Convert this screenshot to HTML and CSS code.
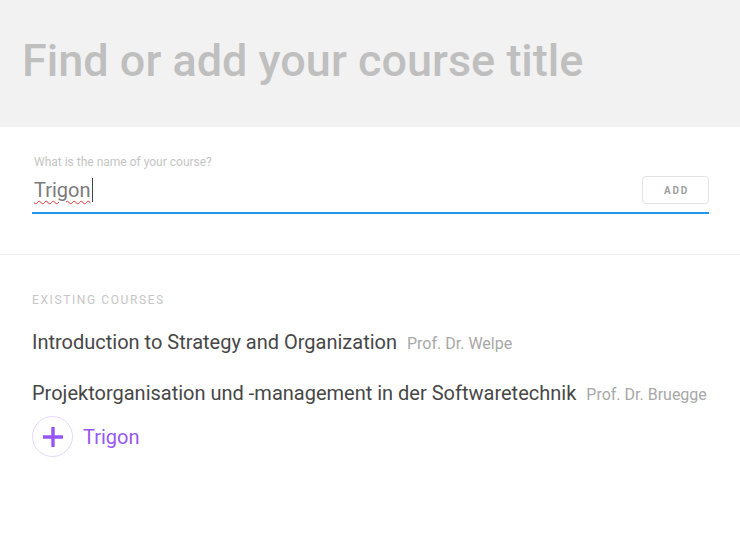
FILE: index.html
```html
<!DOCTYPE html>
<html lang="en">
<head>
<meta charset="utf-8">
<title>Find or add your course title</title>
<link rel="stylesheet" href="styles.css">
</head>
<body>
<header class="header">
  <h1 class="title">Find or add your course title</h1>
</header>
<section class="field">
  <div class="label">What is the name of your course?</div>
  <div class="input-row">
    <div class="input-text"><span class="typed">Trigon</span><span class="caret"></span></div>
    <button class="add-btn">ADD</button>
  </div>
</section>
<section class="existing">
  <div class="section-heading">EXISTING COURSES</div>
  <ul class="courses">
    <li class="course"><span class="course-name">Introduction to Strategy and Organization</span><span class="course-prof">Prof. Dr. Welpe</span></li>
    <li class="course"><span class="course-name">Projektorganisation und -management in der Softwaretechnik</span><span class="course-prof">Prof. Dr. Bruegge</span></li>
  </ul>
  <div class="add-row">
    <span class="plus-circle">
      <svg width="22" height="22" viewBox="0 0 22 22"><path d="M11 1v20M1 11h20" stroke="#9657f5" stroke-width="3.4" fill="none"/></svg>
    </span>
    <span class="add-name">Trigon</span>
  </div>
</section>
</body>
</html>
```

FILE: styles.css
```css
* { box-sizing: border-box; }
html, body {
  margin: 0;
  padding: 0;
  background: #ffffff;
  font-family: Roboto, "Noto Sans", "Liberation Sans", sans-serif;
}
.header {
  background: #f2f2f2;
  height: 127px;
  padding: 0 22px 5px;
  display: flex;
  align-items: center;
}
.title {
  margin: 0;
  font-size: 45px;
  line-height: 48px;
  font-weight: 500;
  color: #bfbfbf;
}
.field {
  padding: 28px 31px 40px 32px;
  border-bottom: 1px solid #eeeeee;
}
.label {
  font-size: 12px;
  line-height: 14px;
  color: #c4c4c4;
  padding-left: 2px;
  margin-bottom: 3px;
}
.input-row {
  display: flex;
  align-items: center;
  justify-content: space-between;
  padding: 4px 0 8px;
  border-bottom: 2px solid #2196f3;
}
.input-text {
  display: flex;
  align-items: center;
  padding-left: 2px;
  font-size: 20px;
  line-height: 28px;
  color: #7a7a7a;
}
.typed {
  text-decoration: underline wavy #e53935;
  text-decoration-thickness: 1px;
  text-underline-offset: 3px;
}
.caret {
  display: inline-block;
  width: 1px;
  height: 24px;
  background: #444444;
  margin-left: 1px;
}
.add-btn {
  width: 67px;
  height: 28px;
  border: 1px solid #e3e3e3;
  border-radius: 4px;
  background: #ffffff;
  font-family: Roboto, "Noto Sans", "Liberation Sans", sans-serif;
  font-size: 10px;
  font-weight: 700;
  letter-spacing: 1.8px;
  color: #a0a0a0;
  padding: 0 0 0 2px;
}
.existing {
  padding: 37px 32px 0;
}
.section-heading {
  font-size: 12px;
  line-height: 16px;
  letter-spacing: 1.6px;
  color: #c6c6c6;
  margin-bottom: 22px;
}
.courses {
  list-style: none;
  margin: 0;
  padding: 0;
  display: flex;
  flex-direction: column;
  gap: 25px;
}
.course {
  display: flex;
  align-items: baseline;
  gap: 10px;
  line-height: 24px;
}
.course-name {
  font-size: 20px;
  color: #474747;
}
.course-prof {
  font-size: 16px;
  color: #a8a8a8;
}
.add-row {
  margin-top: 9px;
  display: flex;
  align-items: center;
  gap: 10px;
}
.plus-circle {
  width: 41px;
  height: 41px;
  border: 1px solid #e4d8fc;
  border-radius: 50%;
  display: flex;
  align-items: center;
  justify-content: center;
}
.plus-circle svg { display: block; }
.add-name {
  font-size: 20px;
  line-height: 24px;
  color: #9657f5;
}
```
